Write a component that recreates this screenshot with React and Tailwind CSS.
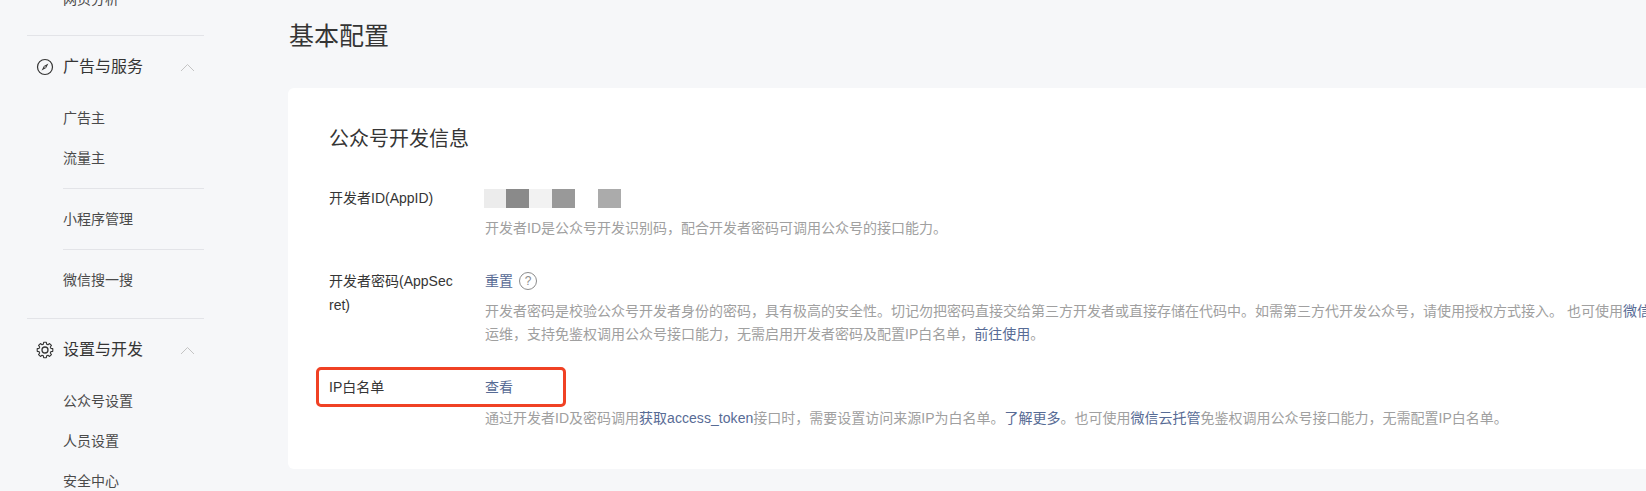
const fontStack = { fontFamily: '"Liberation Sans", "Noto Sans CJK SC", sans-serif' };

// 8 tooth gear outline
const gearPoints = Array.from({ length: 8 })
	.flatMap((_, i) => {
		const mid = (i * Math.PI) / 4;
		return [
			[6.1, mid - 0.27],
			[7.9, mid - 0.17],
			[7.9, mid + 0.17],
			[6.1, mid + 0.27],
		];
	})
	.map(([r, a]) => `${(9 + r * Math.cos(a)).toFixed(2)},${(9 + r * Math.sin(a)).toFixed(2)}`)
	.join(" ");

const SideItem = ({ children, className = "" }) => (
	<div className={`h-[40px] leading-[40px] pl-[36px] text-[14px] text-[#4a4a4a] ${className}`}>
		{children}
	</div>
);

const Chevron = () => (
	<svg width="15" height="9" viewBox="0 0 15 9" fill="none" className="mr-[9px]">
		<path d="M1 8L7.5 1.5L14 8" stroke="#c4c4c4" strokeWidth="1" />
	</svg>
);

const CompassIcon = () => (
	<svg width="18" height="18" viewBox="0 0 18 18" fill="none">
		<circle cx="9" cy="9" r="7.5" stroke="#353535" strokeWidth="1.2" />
		<path d="M12.4 5.6L10.1 10.1L5.6 12.4L7.9 7.9Z" fill="#353535" />
		<circle cx="9" cy="9" r="0.8" fill="#f6f7f9" />
	</svg>
);

const GearIcon = () => (
	<svg width="18" height="18" viewBox="0 0 18 18" fill="none" stroke="#353535" strokeWidth="1.1" strokeLinejoin="round">
		<polygon points={gearPoints} />
		<circle cx="9" cy="9" r="3" strokeWidth="1.3" />
	</svg>
);

const SideHeader = ({ icon, label, className = "" }) => (
	<div className={`h-[40px] flex items-center pl-[9px] ${className}`}>
		<span className="w-[27px] flex items-center">{icon}</span>
		<span className="flex-1 text-[16px] text-[#353535]">{label}</span>
		<Chevron />
	</div>
);

const Link = ({ children, className = "" }) => <span className={`text-[#576b95] ${className}`}>{children}</span>;

const Row = ({ label, value, className = "", children }) => (
	<div className={`flex text-[14px] leading-[24px] ${className}`}>
		<div className="w-[128px] mr-[27px] shrink-0 break-all text-[#353535]">{label}</div>
		<div className="flex-1 min-w-0">
			<div className="h-[24px] flex items-center">{value}</div>
			{children}
		</div>
	</div>
);

const Desc = ({ children, className = "" }) => (
	<div className={`whitespace-nowrap leading-[23px] text-[#a0a0a0] ${className}`}>{children}</div>
);

export default function App() {
	return (
		<div style={fontStack} className="h-[491px] overflow-hidden flex bg-[#f6f7f9]">
			<aside className="w-[288px] shrink-0 pl-[27px] pr-[84px]">
				<SideItem className="-mt-[21px]">网页分析</SideItem>
				<div className="h-px bg-[#e3e4e8] mt-[16px]" />
				<SideHeader icon={<CompassIcon />} label="广告与服务" className="mt-[11px]" />
				<SideItem className="mt-[11px]">广告主</SideItem>
				<SideItem>流量主</SideItem>
				<div className="h-px bg-[#e3e4e8] ml-[36px] mt-[10px]" />
				<SideItem className="mt-[10px]">小程序管理</SideItem>
				<div className="h-px bg-[#e3e4e8] ml-[36px] mt-[10px]" />
				<SideItem className="mt-[10px]">微信搜一搜</SideItem>
				<div className="h-px bg-[#e3e4e8] mt-[18px]" />
				<SideHeader icon={<GearIcon />} label="设置与开发" className="mt-[11px]" />
				<SideItem className="mt-[11px]">公众号设置</SideItem>
				<SideItem>人员设置</SideItem>
				<SideItem>安全中心</SideItem>
			</aside>

			<main className="flex-1 min-w-0 overflow-hidden">
				<h1 className="h-[88px] pt-[18px] pl-[1px] text-[25px] leading-[36px] text-[#353535]">基本配置</h1>
				<section className="bg-white rounded-tl-[6px] rounded-bl-[6px] pt-[37px] pb-[39px] pl-[41px]">
					<h2 className="text-[20px] leading-[28px] text-[#353535]">公众号开发信息</h2>

					<Row
						label="开发者ID(AppID)"
						className="mt-[33px]"
						value={
							<div className="flex h-[19px] w-[137px]">
								<div className="w-[22px] bg-[#ececec]" />
								<div className="w-[23px] bg-[#8a8a8a]" />
								<div className="w-[23px] bg-[#f2f2f2]" />
								<div className="w-[23px] bg-[#999999]" />
								<div className="w-[23px]" />
								<div className="w-[23px] bg-[#ababab]" />
							</div>
						}
					>
						<Desc className="mt-[7px] ml-[1px]">开发者ID是公众号开发识别码，配合开发者密码可调用公众号的接口能力。</Desc>
					</Row>

					<Row
						label="开发者密码(AppSecret)"
						className="mt-[29px]"
						value={
							<>
								<Link className="ml-[1px]">重置</Link>
								<span className="ml-[6px] w-[18px] h-[18px] rounded-full border border-[#8c8c8c] text-[#8c8c8c] text-[12px] leading-[16px] text-center">?</span>
							</>
						}
					>
						<Desc className="mt-[7px] ml-[1px]">
							开发者密码是校验公众号开发者身份的密码，具有极高的安全性。切记勿把密码直接交给第三方开发者或直接存储在代码中。如需第三方代开发公众号，请使用授权方式接入。 也可使用<Link>微信云托管</Link>
						</Desc>
						<Desc className="ml-[1px]">
							运维，支持免鉴权调用公众号接口能力，无需启用开发者密码及配置IP白名单，<Link>前往使用</Link>。
						</Desc>
					</Row>

					<div className="relative mt-[29px]">
						<div className="absolute left-[-13px] top-[-8px] w-[250px] h-[40px] rounded-[5px] border-[3px] border-[#f04124]" />
						<Row label="IP白名单" value={<Link className="ml-[1px]">查看</Link>}>
							<Desc className="mt-[8px] ml-[1px]">
								通过开发者ID及密码调用<Link className="tracking-[0.05px]">获取access_token</Link>接口时，需要设置访问来源IP为白名单。<Link>了解更多</Link>。也可使用<Link>微信云托管</Link>免鉴权调用公众号接口能力，无需配置IP白名单。
							</Desc>
						</Row>
					</div>
				</section>
			</main>
		</div>
	);
}
